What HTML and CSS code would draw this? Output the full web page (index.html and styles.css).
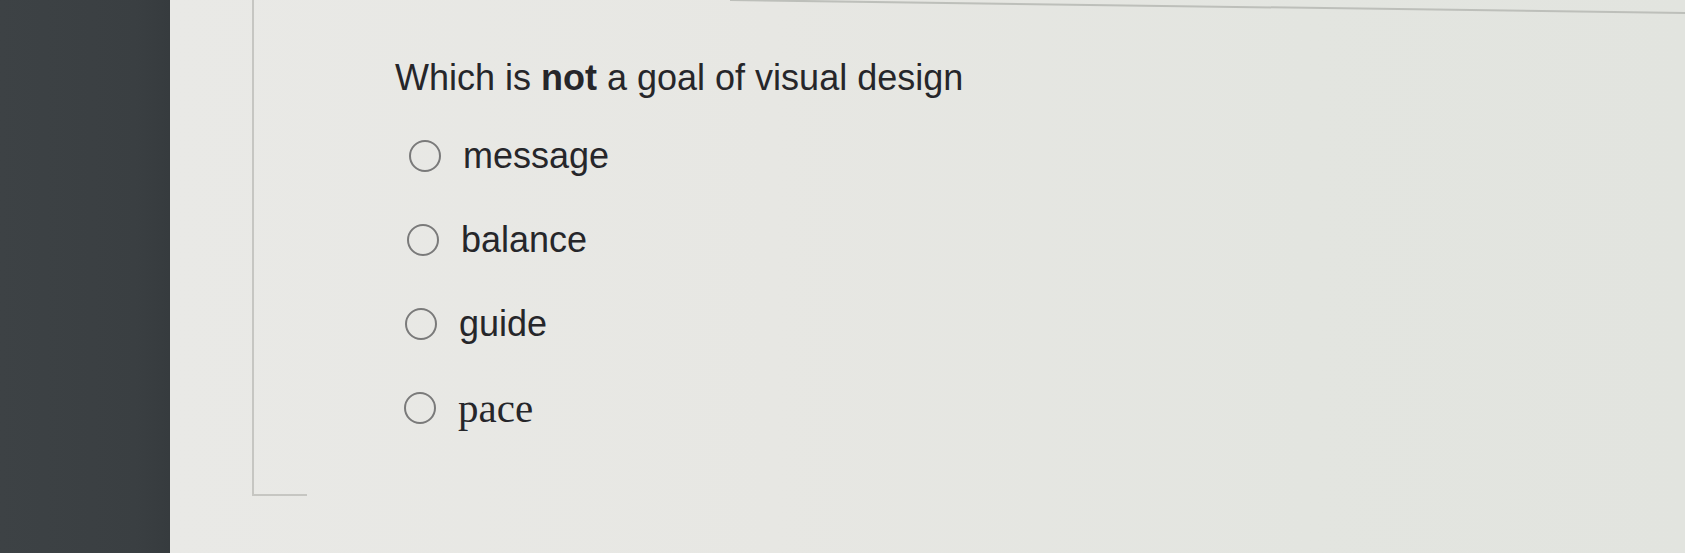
FILE: index.html
```html
<!DOCTYPE html>
<html>
<head>
<meta charset="utf-8">
<link rel="stylesheet" href="styles.css">
</head>
<body>
<div class="page">
  <div class="sidebar"></div>
  <div class="screen">
    <div class="frame">
      <div class="quiz">
        <p class="question">Which is <b>not</b> a goal of visual design</p>
        <ul class="options">
          <li class="option o1"><span class="radio"></span><span class="label">message</span></li>
          <li class="option o2"><span class="radio"></span><span class="label">balance</span></li>
          <li class="option o3"><span class="radio"></span><span class="label">guide</span></li>
          <li class="option o4"><span class="radio"></span><span class="label serif">pace</span></li>
        </ul>
      </div>
    </div>
  </div>
</div>
</body>
</html>
```

FILE: styles.css
```css
html, body {
  margin: 0;
  padding: 0;
  width: 1685px;
  height: 553px;
  overflow: hidden;
}
.page {
  display: flex;
  width: 1685px;
  height: 553px;
}
.sidebar {
  width: 170px;
  flex: none;
  background: linear-gradient(90deg, #3d4245 0%, #3a3f42 80%, #363b3e 100%);
}
.screen {
  flex: 1;
  position: relative;
  padding-left: 82px;
  background: linear-gradient(90deg, #e9e9e6 0%, #e7e7e3 40%, #e3e5e0 75%, #e2e4df 100%);
  font-family: "Liberation Sans", Arial, sans-serif;
  color: #26262a;
}
.screen::before {
  content: "";
  position: absolute;
  left: 560px;
  right: -20px;
  top: -1px;
  height: 2px;
  background: #bdbfba;
  transform-origin: left top;
  transform: rotate(0.78deg);
}
.frame {
  position: relative;
  height: 494px;
  border-left: 2px solid #c6c6c2;
}
.frame::after {
  content: "";
  position: absolute;
  left: -2px;
  bottom: -2px;
  width: 55px;
  height: 2px;
  background: #c6c6c2;
}
.quiz {
  padding-left: 141px;
  padding-top: 58px;
}
.question {
  margin: 0;
  font-size: 36px;
  line-height: 40px;
}
.question b {
  font-weight: bold;
}
.options {
  list-style: none;
  margin: 38px 0 0 0;
  padding: 0;
  display: flex;
  flex-direction: column;
  gap: 44px;
}
.option {
  display: flex;
  align-items: center;
  height: 40px;
}
.radio {
  width: 28px;
  height: 28px;
  border: 2px solid #7a7a7a;
  border-radius: 50%;
  flex: none;
  margin-left: 14px;
  margin-right: 22px;
}
.label {
  font-size: 36px;
  line-height: 40px;
}
.o2 .radio { margin-left: 12px; }
.o3 .radio { margin-left: 10px; }
.o4 .radio { margin-left: 9px; }
.serif {
  font-family: "Liberation Serif", "Times New Roman", serif;
  font-size: 41px;
}
```
